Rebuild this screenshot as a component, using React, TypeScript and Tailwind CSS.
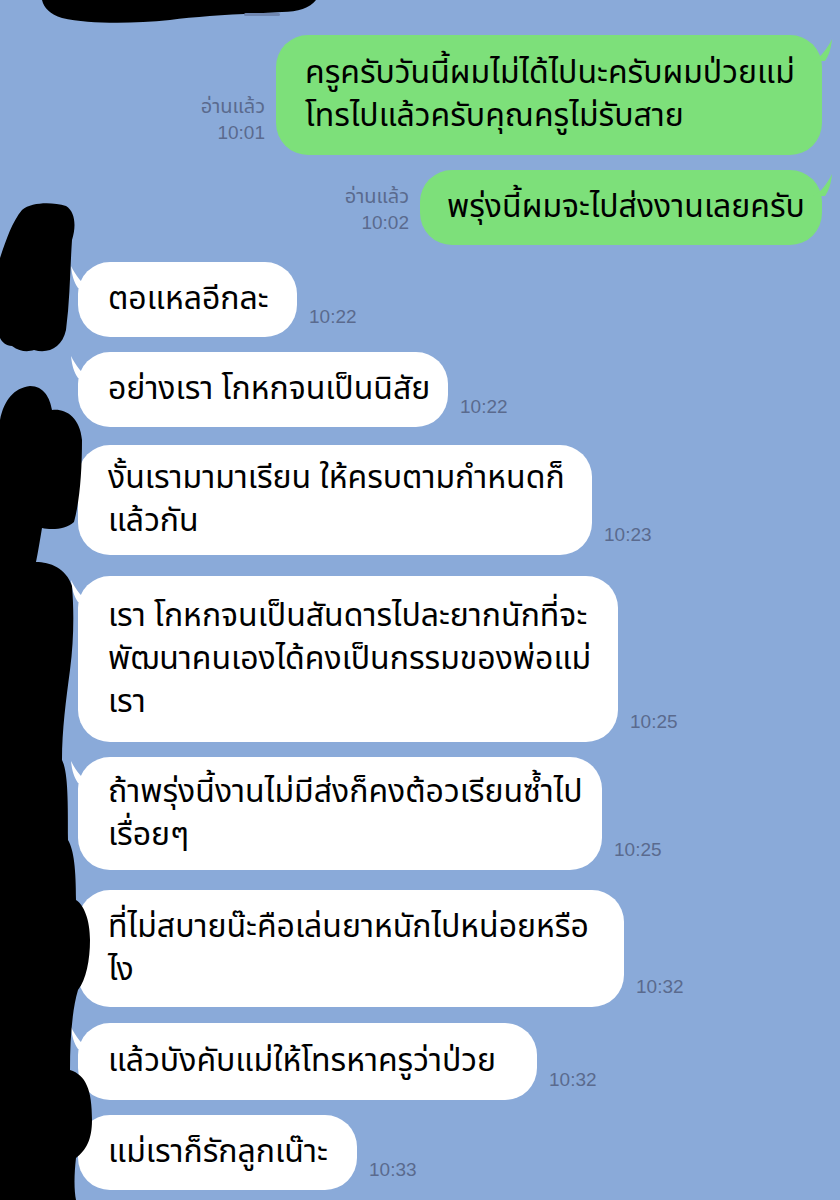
import React from "react";

const THAI = { fontFamily: "'Noto Sans Thai', 'Noto Sans Thai UI', 'Thonburi', 'Noto Sans', 'DejaVu Sans', sans-serif" };
const NUM = { fontFamily: "'Liberation Sans', Arial, sans-serif" };

type Msg = { lines: string[]; time: string; mt: string; size: string };

const incoming: Msg[] = [
  { lines: ["ตอแหลอีกละ"], time: "10:22", mt: "mt-[17px]", size: "w-[219px] h-[75px]" },
  { lines: ["อย่างเรา โกหกจนเป็นนิสัย"], time: "10:22", mt: "mt-[15px]", size: "w-[370px] h-[75px]" },
  { lines: ["งั้นเรามามาเรียน ให้ครบตามกำหนดก็", "แล้วกัน"], time: "10:23", mt: "mt-[18px]", size: "w-[514px] h-[110px]" },
  { lines: ["เรา โกหกจนเป็นสันดารไปละยากนักที่จะ", "พัฒนาคนเองได้คงเป็นกรรมของพ่อแม่", "เรา"], time: "10:25", mt: "mt-[21px]", size: "w-[540px] h-[166px]" },
  { lines: ["ถ้าพรุ่งนี้งานไม่มีส่งก็คงต้อวเรียนซ้ำไป", "เรื่อยๆ"], time: "10:25", mt: "mt-[15px]", size: "w-[524px] h-[113px]" },
  { lines: ["ที่ไม่สบายน๊ะคือเล่นยาหนักไปหน่อยหรือ", "ไง"], time: "10:32", mt: "mt-[20px]", size: "w-[546px] h-[117px]" },
  { lines: ["แล้วบังคับแม่ให้โทรหาครูว่าป่วย"], time: "10:32", mt: "mt-[16px]", size: "w-[459px] h-[77px]" },
  { lines: ["แม่เราก็รักลูกเน๊าะ"], time: "10:33", mt: "mt-[15px]", size: "w-[279px] h-[75px]" },
];

function Lines({ lines }: { lines: string[] }) {
  return (
    <div>
      {lines.map((l, j) => (
        <React.Fragment key={j}>
          {j > 0 && <br />}
          {l}
        </React.Fragment>
      ))}
    </div>
  );
}

function GreenTail() {
  return (
    <svg className="absolute right-[-13px] top-[4px]" width="22" height="22" viewBox="0 0 22 22">
      <path d="M0 22 C8 18 14 10 19 0 C18 10 16 16 12 22 Z" fill="#7de07a" />
    </svg>
  );
}

function WhiteTail() {
  return (
    <svg className="absolute left-[-10px] top-[4px]" width="22" height="22" viewBox="0 0 22 22">
      <path d="M22 22 C14 18 8 10 3 0 C4 10 6 16 10 22 Z" fill="#ffffff" />
    </svg>
  );
}

function Scribbles() {
  return (
    <svg className="absolute left-0 top-0 pointer-events-none" width="840" height="1200" viewBox="0 0 840 1200">
      <path
        d="M42 0 L316 0 C310 8 298 12 282 12 C240 14 200 16 170 20 C130 24 90 24 62 18 C50 14 44 8 42 0 Z"
        fill="#000"
      />
      <rect x="244" y="13" width="36" height="3" rx="1.5" fill="#6f86b0" />
      <path
        d="M0 258 C6 240 12 222 22 210 C32 202 52 202 66 206 C76 212 76 228 72 240 C70 270 70 300 66 330 C62 348 48 354 34 350 C28 352 20 352 12 346 C6 346 2 342 0 338 Z"
        fill="#000"
      />
      <path
        d="M0 420 C4 400 14 388 30 386 C44 386 50 398 52 410 C64 408 80 416 82 440 C82 470 80 500 74 522 C66 530 50 530 42 528 C40 540 38 552 36 562 C50 562 66 568 72 586 C74 610 74 640 70 670 C66 700 62 730 62 760 C68 772 68 800 68 840 C74 850 76 870 76 900 C84 905 90 920 90 940 C90 960 86 980 78 990 C72 1010 70 1040 70 1070 C86 1075 92 1090 92 1120 C92 1140 86 1150 76 1158 C74 1175 74 1190 76 1200 L0 1200 Z"
        fill="#000"
      />
    </svg>
  );
}

function ReadLabel({ time }: { time: string }) {
  return (
    <div className="mr-[11px] mb-[10px] flex flex-col items-end leading-[25px] text-[#5a6a8e]">
      <span className="text-[20px]">อ่านแล้ว</span>
      <span style={NUM} className="text-[19px]">{time}</span>
    </div>
  );
}

export default function App() {
  return (
    <div className="relative w-[840px] h-[1200px] overflow-hidden bg-[#8aaad9]" style={THAI}>
      <div className="flex flex-col pt-[35px]">
        <div className="flex justify-end items-end pr-[18px]">
          <ReadLabel time="10:01" />
          <div className="relative flex flex-col justify-center w-[546px] h-[120px] rounded-[32px] bg-[#7de07a] pl-[29px] text-[32px] leading-[43px] text-black whitespace-nowrap">
            <GreenTail />
            <Lines lines={["ครูครับวันนี้ผมไม่ได้ไปนะครับผมป่วยแม่", "โทรไปแล้วครับคุณครูไม่รับสาย"]} />
          </div>
        </div>
        <div className="flex justify-end items-end pr-[18px] mt-[15px]">
          <ReadLabel time="10:02" />
          <div className="relative flex flex-col justify-center w-[402px] h-[75px] rounded-[32px] bg-[#7de07a] pl-[27px] text-[32px] leading-[43px] text-black whitespace-nowrap">
            <GreenTail />
            <Lines lines={["พรุ่งนี้ผมจะไปส่งงานเลยครับ"]} />
          </div>
        </div>
        {incoming.map((m, i) => (
          <div key={i} className={`flex items-end pl-[78px] ${m.mt}`}>
            <div
              className={`relative flex flex-col justify-center rounded-[32px] bg-white pl-[30px] text-[32px] leading-[43px] text-black whitespace-nowrap ${m.size}`}
            >
              <WhiteTail />
              <Lines lines={m.lines} />
            </div>
            <span className="ml-[12px] mb-[6px] text-[19px] text-[#5a6a8e]" style={NUM}>
              {m.time}
            </span>
          </div>
        ))}
      </div>
      <Scribbles />
    </div>
  );
}
